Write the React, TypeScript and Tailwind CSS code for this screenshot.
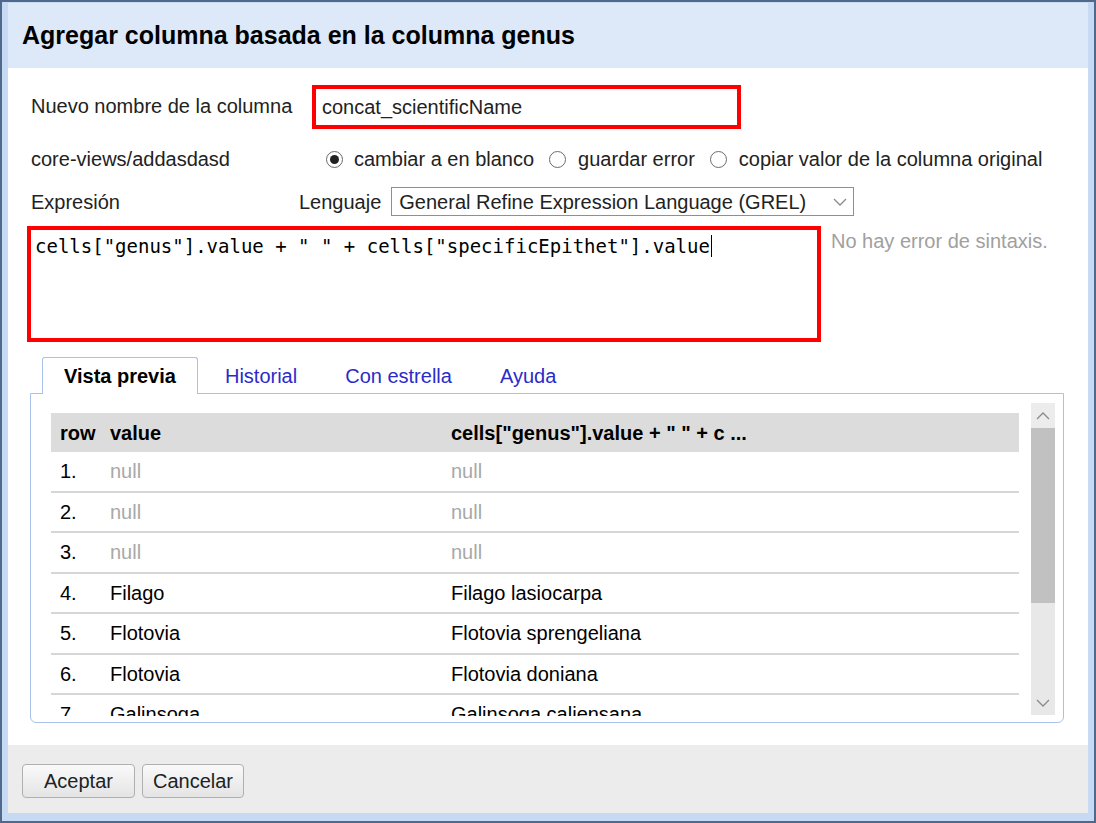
import React from "react";

const rows = [
  { n: "1.", value: "null", result: "null", empty: true },
  { n: "2.", value: "null", result: "null", empty: true },
  { n: "3.", value: "null", result: "null", empty: true },
  { n: "4.", value: "Filago", result: "Filago lasiocarpa" },
  { n: "5.", value: "Flotovia", result: "Flotovia sprengeliana" },
  { n: "6.", value: "Flotovia", result: "Flotovia doniana" },
  { n: "7.", value: "Galinsoga", result: "Galinsoga caliensana" },
];

function Radio({ checked }: { checked?: boolean }) {
  return (
    <span className="flex h-[17px] w-[17px] shrink-0 items-center justify-center rounded-full border border-[#6b6b6b] bg-white">
      {checked && <span className="h-[9px] w-[9px] rounded-full bg-[#222]" />}
    </span>
  );
}

function Chevron({ up }: { up?: boolean }) {
  return (
    <svg width="14" height="8" viewBox="0 0 14 8" aria-hidden="true">
      <path
        d={up ? "M1 7 L7 1 L13 7" : "M1 1 L7 7 L13 1"}
        fill="none"
        stroke="#8a8a8a"
        strokeWidth="1.3"
      />
    </svg>
  );
}

export default function App() {
  return (
    <div className="flex h-[823px] w-[1096px] flex-col border-2 border-[#50698a] bg-[#c6daf4] px-[6px] pt-[1px] pb-[8px] font-['Liberation_Sans',Arial,sans-serif] text-[20px] text-[#222]">
      {/* title */}
      <div className="flex h-[65px] shrink-0 items-center bg-[#dde8f9] pl-[14px] pt-[1px] text-[25px] font-bold text-black">
        Agregar columna basada en la columna genus
      </div>

      {/* body */}
      <div className="flex h-[677px] shrink-0 flex-col bg-white pl-[19px]">
        <div className="mt-[17px] flex h-[44px] items-center">
          <span className="ml-[4px] w-[281px] -translate-y-[1px]">Nuevo nombre de la columna</span>
          <div className="flex h-[44px] w-[429px] items-center border-4 border-[#ff0000] pl-[6px]">
            concat_scientificName
          </div>
        </div>

        <div className="mt-[16px] flex h-[28px] items-center">
          <span className="ml-[4px] w-[295px]">core-views/addasdasd</span>
          <Radio checked />
          <span className="ml-[11px] mr-[15px]">cambiar a en blanco</span>
          <Radio />
          <span className="ml-[12px] mr-[15px]">guardar error</span>
          <Radio />
          <span className="ml-[12px]">copiar valor de la columna original</span>
        </div>

        <div className="mt-[14px] flex h-[29px] items-center">
          <span className="ml-[4px] w-[268px]">Expresión</span>
          <span className="mr-[10px]">Lenguaje</span>
          <div className="flex h-[29px] w-[463px] items-center justify-between border border-[#8f8f8f] pl-[7px] pr-[6px]">
            <span>General Refine Expression Language (GREL)</span>
            <Chevron />
          </div>
        </div>

        <div className="mt-[10px] flex">
          <div className="h-[116px] w-[794px] border-4 border-[#ff0000] pl-[4px] pt-[1px] font-['DejaVu_Sans_Mono',monospace] text-[19px] leading-[24px] text-black">
            cells["genus"].value + " " + cells["specificEpithet"].value
            <span className="ml-[1px] inline-block h-[22px] w-[1px] translate-y-[4px] bg-black" />
          </div>
          <span className="ml-[10px] text-[#a0a0a0]">No hay error de sintaxis.</span>
        </div>

        {/* tabs */}
        <div className="ml-[3px] mt-[15px] w-[1034px]">
          <div className="relative z-10 flex h-[37px] items-end pl-[12px]">
            <div className="flex h-[37px] items-center rounded-t-[3px] border border-b-0 border-[#a9c2ea] bg-white px-[21px] font-bold text-black">
              Vista previa
            </div>
            <div className="flex h-[37px] items-center pl-[27px] pr-[24px] text-[#2b2bc9]">Historial</div>
            <div className="flex h-[37px] items-center px-[24px] text-[#2b2bc9]">Con estrella</div>
            <div className="flex h-[37px] items-center px-[24px] text-[#2b2bc9]">Ayuda</div>
          </div>

          <div className="-mt-px flex h-[330px] rounded-b-[6px] border border-[#a9c2ea] bg-white">
            <div className="h-[322px] w-[989px] overflow-hidden pl-[20px] pt-[19px]">
              <div className="w-[968px]">
                <div className="flex h-[39px] items-center bg-[#dcdcdc] font-bold text-black">
                  <span className="w-[59px] pl-[9px]">row</span>
                  <span className="w-[341px]">value</span>
                  <span>cells["genus"].value + " " + c ...</span>
                </div>
                {rows.map((r) => (
                  <div key={r.n} className="flex h-[40.5px] items-center border-b-2 border-[#d6d6d6]">
                    <span className="w-[59px] pl-[9px] text-black">{r.n}</span>
                    <span className={`w-[341px] ${r.empty ? "text-[#a8a8a8]" : "text-black"}`}>{r.value}</span>
                    <span className={r.empty ? "text-[#a8a8a8]" : "text-black"}>{r.result}</span>
                  </div>
                ))}
              </div>
            </div>

            {/* scrollbar */}
            <div className="ml-[11px] mt-[9px] flex h-[312px] w-[24px] flex-col bg-[#e8e8e8]">
              <div className="flex h-[25px] items-center justify-center bg-[#ececec]">
                <Chevron up />
              </div>
              <div className="h-[175px] bg-[#c1c1c1]" />
              <div className="flex-1" />
              <div className="flex h-[25px] items-center justify-center">
                <Chevron />
              </div>
            </div>
          </div>
        </div>
      </div>

      {/* footer */}
      <div className="flex h-[68px] shrink-0 items-start gap-[7px] bg-[#ececec] pl-[14px] pt-[19px]">
        <button className="h-[34px] w-[113px] rounded-[4px] border border-[#b0b0b0] bg-gradient-to-b from-[#fafafa] to-[#e4e4e4] text-[20px] text-[#222]">
          Aceptar
        </button>
        <button className="h-[34px] w-[102px] rounded-[4px] border border-[#b0b0b0] bg-gradient-to-b from-[#fafafa] to-[#e4e4e4] text-[20px] text-[#222]">
          Cancelar
        </button>
      </div>
    </div>
  );
}
